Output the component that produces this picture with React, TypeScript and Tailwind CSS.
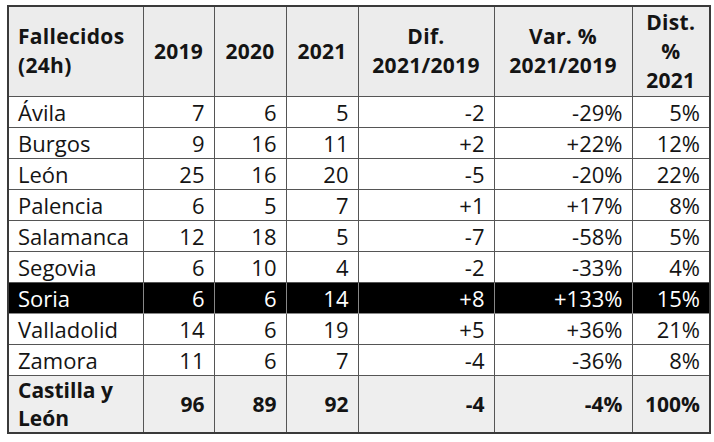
const rows: [string, string, string, string, string, string, string][] = [
  ["Ávila", "7", "6", "5", "-2", "-29%", "5%"],
  ["Burgos", "9", "16", "11", "+2", "+22%", "12%"],
  ["León", "25", "16", "20", "-5", "-20%", "22%"],
  ["Palencia", "6", "5", "7", "+1", "+17%", "8%"],
  ["Salamanca", "12", "18", "5", "-7", "-58%", "5%"],
  ["Segovia", "6", "10", "4", "-2", "-33%", "4%"],
  ["Soria", "6", "6", "14", "+8", "+133%", "15%"],
  ["Valladolid", "14", "6", "19", "+5", "+36%", "21%"],
  ["Zamora", "11", "6", "7", "-4", "-36%", "8%"],
];

const widths = ["w-[135px]", "w-[71px]", "w-[72px]", "w-[72px]", "w-[136px]", "w-[138px]", "w-[78px]"];

export default function App() {
  return (
    <div className="w-[714px] h-[442px] bg-white pt-[5px] pl-[7px] font-['Open_Sans',sans-serif] text-[#141414]">
      <table className="border-collapse table-fixed border-2 border-[#3a3a3a]">
        <colgroup>
          {widths.map((w, i) => (
            <col key={i} className={w} />
          ))}
        </colgroup>
        <thead>
          <tr className="h-[90px] bg-[#ececec] text-[21px] leading-[29px] tracking-[0.3px]">
            <th className="border border-[#555] text-left pl-[9px] font-bold">
              Fallecidos
              <br />
              (24h)
            </th>
            <th className="border border-[#555] font-bold">2019</th>
            <th className="border border-[#555] font-bold">2020</th>
            <th className="border border-[#555] font-bold">2021</th>
            <th className="border border-[#555] font-bold">
              Dif.
              <br />
              2021/2019
            </th>
            <th className="border border-[#555] font-bold">
              Var. %
              <br />
              2021/2019
            </th>
            <th className="border border-[#555] font-bold">
              Dist.
              <br />%<br />
              2021
            </th>
          </tr>
        </thead>
        <tbody className="text-[22px]">
          {rows.map((r) => {
            const dark = r[0] === "Soria";
            return (
              <tr key={r[0]} className={`h-[31px] ${dark ? "bg-black text-white" : "bg-white"}`}>
                {r.map((c, i) => (
                  <td
                    key={i}
                    className={`border ${dark ? "border-[#888]" : "border-[#555]"} leading-none ${i === 0 ? "text-left pl-[9px]" : "text-right pr-[9px]"}`}
                  >
                    {c}
                  </td>
                ))}
              </tr>
            );
          })}
          <tr className="h-[58px] bg-[#eeeeee] font-bold text-[21px] leading-[28px]">
            <td className="border border-[#555] text-left pl-[9px]">
              Castilla y
              <br />
              León
            </td>
            <td className="border border-[#555] text-right pr-[9px]">96</td>
            <td className="border border-[#555] text-right pr-[9px]">89</td>
            <td className="border border-[#555] text-right pr-[9px]">92</td>
            <td className="border border-[#555] text-right pr-[9px]">-4</td>
            <td className="border border-[#555] text-right pr-[9px]">-4%</td>
            <td className="border border-[#555] text-right pr-[9px]">100%</td>
          </tr>
        </tbody>
      </table>
    </div>
  );
}
